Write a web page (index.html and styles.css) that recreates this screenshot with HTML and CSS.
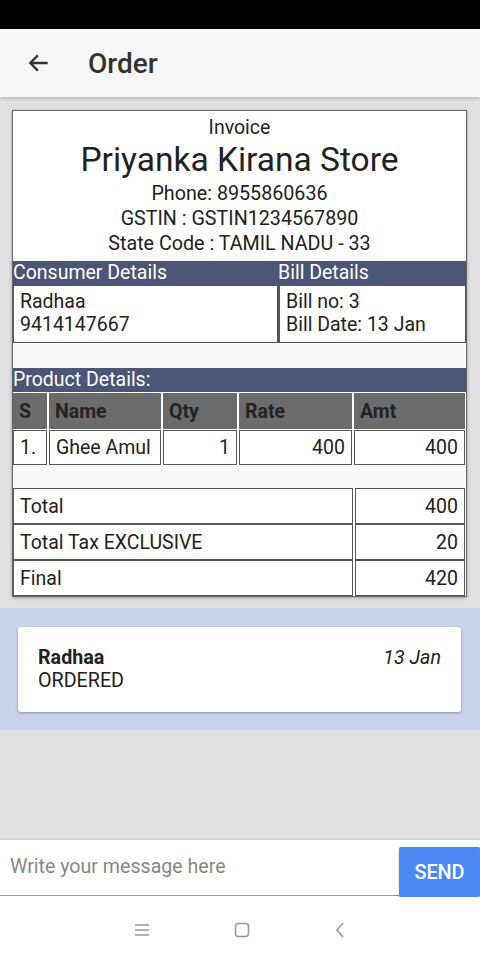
FILE: index.html
```html
<!DOCTYPE html>
<html lang="en">
<head>
    <meta charset="UTF-8">
    <meta name="viewport" content="width=device-width, initial-scale=1.0">
    <title>Order</title>
    <link rel="stylesheet" href="styles.css">
</head>
<body>
    <div class="status"></div>

    <div class="toolbar">
        <svg class="back" width="26" height="26" viewBox="0 0 24 24">
            <path d="M20 12H5M11 5l-7 7 7 7" fill="none" stroke="#333" stroke-width="2.2"/>
        </svg>
        <span class="title">Order</span>
    </div>

    <div class="content">
        <div class="invoice">
            <div class="head">
                <div class="inv">Invoice</div>
                <div class="store">Priyanka Kirana Store</div>
                <div class="line">Phone: 8955860636</div>
                <div class="line">GSTIN : GSTIN1234567890</div>
                <div class="line">State Code : TAMIL NADU - 33</div>
            </div>

            <div class="details">
                <div class="col left">
                    <div class="bar">Consumer Details</div>
                    <div class="cell">Radhaa<br>9414147667</div>
                </div>
                <div class="col right">
                    <div class="bar">Bill Details</div>
                    <div class="cell">Bill no: 3<br>Bill Date: 13 Jan</div>
                </div>
            </div>

            <div class="spacer"></div>

            <div class="bar">Product Details:</div>
            <table class="products">
                <thead>
                    <tr>
                        <th class="c-s">S</th>
                        <th class="c-name">Name</th>
                        <th class="c-qty">Qty</th>
                        <th class="c-rate">Rate</th>
                        <th class="c-amt">Amt</th>
                    </tr>
                </thead>
                <tbody>
                    <tr>
                        <td>1.</td>
                        <td>Ghee Amul</td>
                        <td class="num">1</td>
                        <td class="num">400</td>
                        <td class="num">400</td>
                    </tr>
                </tbody>
            </table>

            <div class="spacer small"></div>

            <table class="totals">
                <tr><td>Total</td><td class="num">400</td></tr>
                <tr><td>Total Tax EXCLUSIVE</td><td class="num">20</td></tr>
                <tr><td>Final</td><td class="num">420</td></tr>
            </table>
        </div>

        <div class="orders">
            <div class="order-card">
                <div>
                    <div class="name">Radhaa</div>
                    <div>ORDERED</div>
                </div>
                <div class="date">13 Jan</div>
            </div>
        </div>
    </div>

    <div class="composer">
        <div class="msg">Write your message here</div>
        <button class="send">SEND</button>
    </div>

    <div class="navbar">
        <svg width="16" height="14" viewBox="0 0 16 14">
            <path d="M1 2h14M1 7h14M1 12h14" stroke="#999" stroke-width="1.5"/>
        </svg>
        <svg width="16" height="16" viewBox="0 0 16 16">
            <rect x="1.5" y="1.5" width="13" height="13" rx="3" fill="none" stroke="#999" stroke-width="1.5"/>
        </svg>
        <svg width="12" height="18" viewBox="0 0 12 18">
            <path d="M9 2L3 9l6 7" fill="none" stroke="#999" stroke-width="1.5"/>
        </svg>
    </div>
</body>
</html>
```

FILE: styles.css
```css
body {
    font-family: Roboto, "Liberation Sans", sans-serif;
    margin: 0;
    padding: 0;
    width: 480px;
    height: 960px;
    display: flex;
    flex-direction: column;
    background-color: #fff;
    color: #222;
    overflow: hidden;
}
.status {
    height: 29px;
    background: #000;
}
.toolbar {
    height: 68px;
    background: #f7f7f7;
    display: flex;
    align-items: center;
    box-shadow: 0 2px 3px rgba(0, 0, 0, 0.15);
    position: relative;
    z-index: 1;
}
.back {
    margin-left: 26px;
}
.title {
    margin-left: 36px;
    font-size: 28px;
    font-weight: 500;
    color: #333;
}
.content {
    flex: 1;
    background: #e0e0e0;
    padding-top: 13px;
}
.invoice {
    margin: 0 13px 0 12px;
    background: #fff;
    border: 1px solid #666;
    box-shadow: 0 1px 3px rgba(0, 0, 0, 0.3);
}
.head {
    text-align: center;
    padding: 6px 0 5px;
}
.inv {
    font-size: 19.5px;
    line-height: 22px;
}
.store {
    font-size: 33.5px;
    line-height: 42px;
}
.line {
    font-size: 19.7px;
    line-height: 25px;
}
.bar {
    background: #4b5576;
    color: #fff;
    font-size: 19.5px;
    line-height: 24px;
    height: 24px;
}
.details {
    display: flex;
}
.col.left {
    width: 265px;
}
.col.right {
    flex: 1;
}
.cell {
    border: 1px solid #555;
    padding: 4px 6px 0;
    box-sizing: border-box;
    height: 58px;
    font-size: 19.5px;
    line-height: 23px;
}
.col.right .cell {
    border-left: 2px solid #555;
}
.spacer {
    height: 25px;
    background: #fafafa;
}
.spacer.small {
    height: 22px;
}
table {
    border-collapse: separate;
    border-spacing: 2px 1px;
    margin: 0 -1px 0 -2px;
    width: calc(100% + 3px);
    font-size: 19.5px;
}
.products th {
    background: #6b6b6b;
    color: #242424;
    text-align: left;
    height: 36px;
    padding: 0 6px;
    font-weight: bold;
}
.products td {
    border: 1px solid #555;
    height: 33px;
    padding: 0 6px;
}
.c-s { width: 22px; }
.c-name { width: 100px; }
.c-qty { width: 62px; }
.c-rate { width: 101px; }
.num {
    text-align: right;
}
.totals {
    border-spacing: 2px 0;
}
.totals td {
    border: 1px solid #555;
    height: 34px;
    padding: 0 6px;
}
.totals td.num {
    width: 96px;
}
.orders {
    margin-top: 11px;
    background: #c7d4e9;
    padding: 19px 19px 18px 18px;
}
.order-card {
    background: #fff;
    border-radius: 3px;
    box-shadow: 0 1px 3px rgba(0, 0, 0, 0.3);
    display: flex;
    justify-content: space-between;
    padding: 19px 20px 20px;
    font-size: 19.7px;
    line-height: 23px;
}
.name {
    font-weight: bold;
}
.date {
    font-style: italic;
}
.composer {
    height: 57px;
    display: flex;
    background: #fff;
    box-shadow: 0 -1px 2px rgba(0, 0, 0, 0.1);
}
.msg {
    flex: 1;
    border-bottom: 1px solid #999;
    margin-bottom: 1px;
    color: #888;
    font-size: 19.6px;
    padding: 15px 10px 0;
}
.send {
    width: 81px;
    height: 50px;
    margin-top: 7px;
    border: none;
    border-radius: 2px;
    background: #4a89f3;
    color: #fff;
    font-family: Roboto, "Liberation Sans", sans-serif;
    font-size: 19.8px;
    font-weight: 500;
    box-shadow: 0 2px 3px rgba(0, 0, 0, 0.25);
}
.navbar {
    height: 63px;
    background: #fff;
    display: flex;
    align-items: center;
    justify-content: center;
    gap: 84px;
    padding-top: 3px;
    box-sizing: border-box;
}
```
